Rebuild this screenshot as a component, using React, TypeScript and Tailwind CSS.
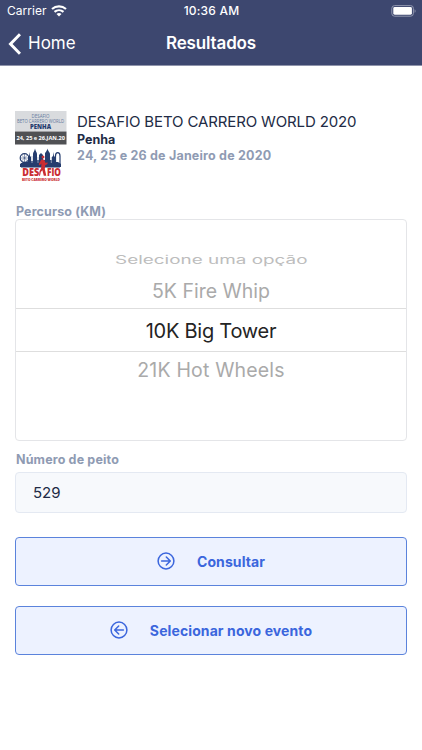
import React from 'react';

const WifiIcon: React.FC = () => (
    <svg width="16" height="12" viewBox="0 0 16 12" fill="none" stroke="#fff" strokeWidth="2.1">
        <path d="M1 4.1C5 .4 11 .4 15 4.1" />
        <path d="M3.5 6.9C6.1 4.6 9.9 4.6 12.5 6.9" />
        <path d="M8 11.4 5.5 8.9C6.9 7.7 9.1 7.7 10.5 8.9Z" fill="#fff" stroke="none" />
    </svg>
);

const BatteryIcon: React.FC = () => (
    <svg width="26" height="12" viewBox="0 0 26 12" fill="none">
        <rect x="1.8" y=".6" width="21.6" height="10.6" rx="2.8" stroke="#9298b0" strokeWidth="1" />
        <rect x="3.3" y="2.1" width="18.6" height="7.6" rx="1.4" fill="#fff" />
        <path d="M24.6 4.2V7.8C25.9 7.4 25.9 4.6 24.6 4.2Z" fill="#9298b0" />
    </svg>
);

const EventLogo: React.FC = () => (
    <svg width="51" height="72" viewBox="0 0 51 72" className="shrink-0 overflow-visible" fontFamily="Open Sans, sans-serif" textAnchor="middle">
        <rect width="51.5" height="20.5" fill="#d9dbde" />
        <g fill="#63789d">
            <text x="25.5" y="6.5" fontSize="4.6" textLength="18" lengthAdjust="spacingAndGlyphs">DESAFIO</text>
            <text x="25.5" y="11.8" fontSize="4.7" textLength="47" lengthAdjust="spacingAndGlyphs">BETO CARRERO WORLD</text>
        </g>
        <text x="25.5" y="18.4" fontSize="6.3" fontWeight="800" fill="#263d6e" textLength="21" lengthAdjust="spacingAndGlyphs">PENHA</text>
        <rect y="20.5" width="51.5" height="13" fill="#505154" />
        <text x="25.7" y="29.4" fontSize="5.8" fontWeight="700" fill="#fff" textLength="48.5" lengthAdjust="spacingAndGlyphs">24, 25 e 26.JAN.20</text>
        {/* park skyline */}
        <g fill="#263d6e">
            <path d="M5 56V53L8 51H13V46L14 45 14.5 41 15 45 16 46V50H18V43C18 41 19.5 40.5 20 37.5 20.5 40.5 22 41 22 43V49H24V44L26 42 28 44V49H30V43C30 41 32 40.5 32.5 37.5 33 40.5 35 41 35 43V49H37V46L38 45 38.5 41 39 45 40 46V51H43L46 53V56Z" />
            <rect x="6" y="52" width="39" height="4.5" />
        </g>
        <g fill="none" stroke="#263d6e">
            <circle cx="9.5" cy="47" r="4.3" strokeWidth="1.2" />
            <path d="M9.5 43V52M5.5 47H13.5M6.5 44L12.5 50M12.5 44L6.5 50" strokeWidth=".5" />
            <path d="M40.5 55V45C40.5 40.5 45 40.5 45 45V55" strokeWidth="1.2" />
        </g>
        <path d="M17 45V52M23 46V52M36.3 46V52" stroke="#aab3c5" strokeWidth=".8" />
        <g fill="#ca2d32">
            <text x="15.8" y="65.2" fontSize="10.4" fontWeight="800" textLength="17" lengthAdjust="spacingAndGlyphs">DES</text>
            <text x="39" y="65.2" fontSize="10.4" fontWeight="800" textLength="14" lengthAdjust="spacingAndGlyphs">FIO</text>
            <text x="26" y="69.6" fontSize="3.8" fontWeight="800" textLength="38" lengthAdjust="spacingAndGlyphs">BETO CARRERO WORLD</text>
            <circle cx="28" cy="46" r="1.5" />
            <path d="M26.3 48.5H29.2L30.6 52 32.5 51.2V53L30.2 54.2 29.8 58 31.3 64.8H28.8L27.4 59.3 25.8 61 25 64.8H24L24.6 60 26.2 57 26.4 52.5 24.7 54.5 23.7 53.2Z" />
        </g>
    </svg>
);

interface ArrowCircleProps {
    direction: 'left' | 'right';
}

const ArrowCircle: React.FC<ArrowCircleProps> = ({ direction }) => (
    <svg
        width="18"
        height="18"
        viewBox="0 0 18 18"
        fill="none"
        stroke="#3b66dd"
        strokeWidth="1.5"
        strokeLinecap="round"
        strokeLinejoin="round"
        className={direction === 'left' ? 'mb-0.5 -scale-x-100' : 'mb-0.5'}
    >
        <circle cx="9" cy="9" r="7.9" />
        <path d="M4.6 9H13.2M9.3 5 13.3 9 9.3 13" />
    </svg>
);

interface ActionButtonProps {
    label: string;
    direction: 'left' | 'right';
}

const ActionButton: React.FC<ActionButtonProps> = ({ label, direction }) => (
    <button className="flex h-[49px] w-full items-center justify-center gap-[22px] rounded border border-[#5b83dc] bg-[#edf2ff] text-[14px] font-bold tracking-[0.1px] text-[#3b66dd]">
        <ArrowCircle direction={direction} />
        <span>{label}</span>
    </button>
);

const App: React.FC = () => {
    return (
        <div className="h-[750px] w-[422px] overflow-hidden bg-white font-[Inter,sans-serif] text-[#222b45]">
            <header className="h-[66px] border-b border-[#8f94ab] bg-[#3d476f] text-white">
                <div className="grid h-[22px] grid-cols-3 items-center pr-[6px] pl-[7px] text-[12px]">
                    <div className="flex items-center gap-[4px]">
                        <span className="tracking-[0.05px]">Carrier</span>
                        <WifiIcon />
                    </div>
                    <span className="text-center font-medium tracking-[0.2px]">10:36 AM</span>
                    <div className="flex justify-end">
                        <BatteryIcon />
                    </div>
                </div>
                <div className="grid h-[43px] grid-cols-3 items-center">
                    <button className="flex items-center gap-[7px] pl-[8px] text-[17px]">
                        <svg width="13" height="22" viewBox="0 0 13 22" fill="none" stroke="#fff" strokeWidth="3">
                            <path d="M12 1.2 2.5 11 12 20.8" />
                        </svg>
                        <span>Home</span>
                    </button>
                    <h1 className="text-center text-[17px] font-semibold tracking-[-0.15px]">Resultados</h1>
                </div>
            </header>

            <main className="px-[15px] pt-[45px]">
                <section className="flex h-[72px] gap-[11px]">
                    <EventLogo />
                    <div className="whitespace-nowrap">
                        <h2 className="text-[15px] leading-[21px] tracking-[-0.13px]">DESAFIO BETO CARRERO WORLD 2020</h2>
                        <p className="text-[12.5px] leading-4 font-bold">Penha</p>
                        <p className="text-[12.5px] leading-4 font-bold tracking-[0.2px] text-[#8f9bb3]">24, 25 e 26 de Janeiro de 2020</p>
                    </div>
                </section>

                <div className="mt-5 h-4 pt-px pl-px text-[12.5px] leading-4 font-bold tracking-[0.12px] text-[#8f9bb3]">Percurso (KM)</div>
                <div className="flex h-[222px] w-full flex-col items-center rounded border border-[#e4e5e8] pt-[25px] whitespace-nowrap">
                    <div className="flex h-[28px] origin-center scale-x-[1.35] items-center text-[14px] text-[#bdbdbd]">
                        <span className="scale-y-[0.8]">Selecione uma opção</span>
                    </div>
                    <div className="flex h-[35px] items-center pt-[2px] text-[19.5px] text-[#aaa]">5K Fire Whip</div>
                    <div className="flex h-[44px] w-full items-center justify-center border-y border-[#dedede] pt-px text-[20px] tracking-[-0.25px] text-[#242424]">10K Big Tower</div>
                    <div className="flex h-[36px] items-center pt-[2px] text-[19.5px] tracking-[0.18px] text-[#aaa]">21K Hot Wheels</div>
                </div>

                <div className="mt-[11px] h-4 pl-px text-[12.5px] leading-4 font-bold tracking-[0.15px] text-[#8f9bb3]">Número de peito</div>
                <input
                    defaultValue="529"
                    className="mt-1 block h-[41px] w-full rounded border border-[#e4e9f2] bg-[#f7f9fc] px-[17px] text-[15px] outline-none"
                />

                <div className="mt-6 flex flex-col gap-5">
                    <ActionButton label="Consultar" direction="right" />
                    <ActionButton label="Selecionar novo evento" direction="left" />
                </div>
            </main>
        </div>
    );
};

export default App;
